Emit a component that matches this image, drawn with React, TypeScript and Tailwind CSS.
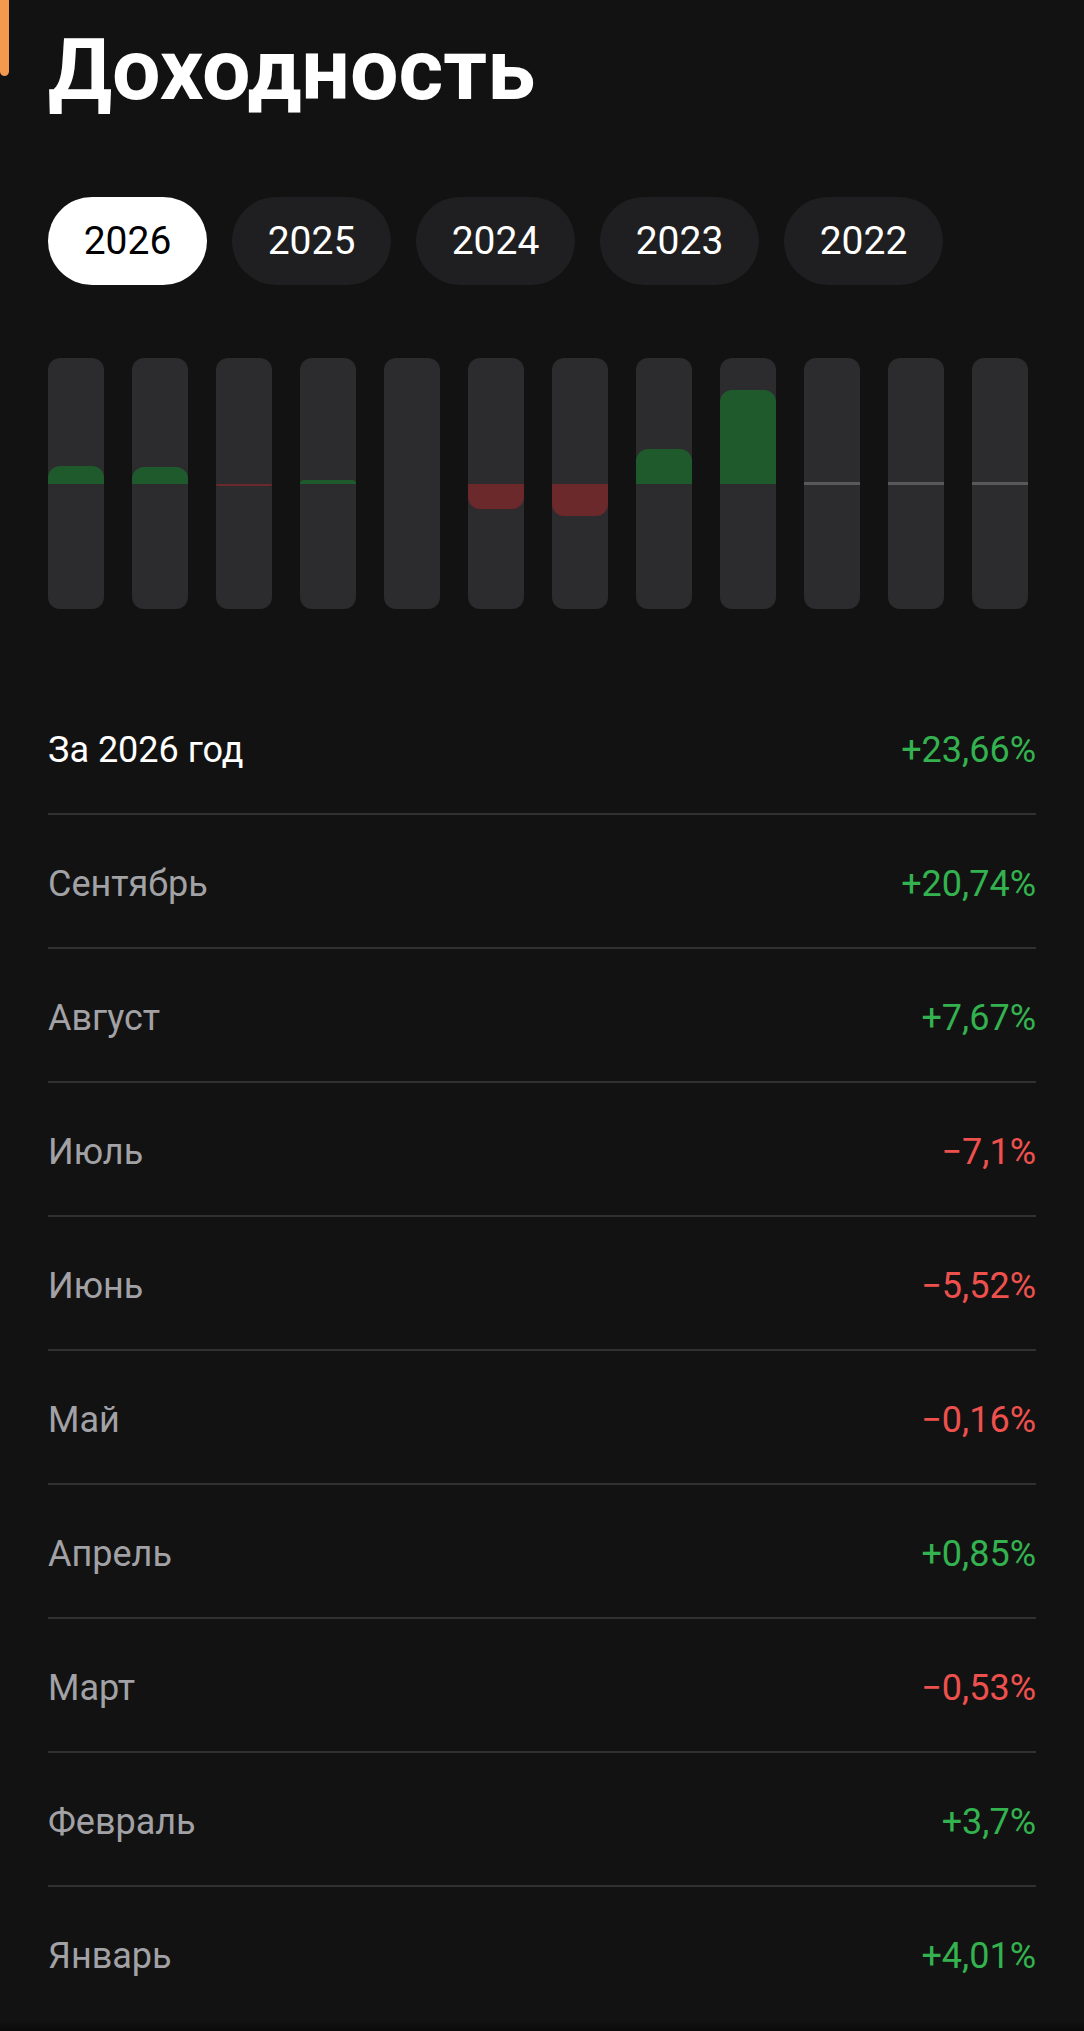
import React from "react"

const years = ["2026", "2025", "2024", "2023", "2022"]

// monthly returns, Jan..Dec (null = month not reached yet)
const monthly: (number | null)[] = [4.01, 3.7, -0.53, 0.85, -0.16, -5.52, -7.1, 7.67, 20.74, null, null, null]

const rows = [
  { label: "Сентябрь", value: "+20,74%", up: true },
  { label: "Август", value: "+7,67%", up: true },
  { label: "Июль", value: "−7,1%", up: false },
  { label: "Июнь", value: "−5,52%", up: false },
  { label: "Май", value: "−0,16%", up: false },
  { label: "Апрель", value: "+0,85%", up: true },
  { label: "Март", value: "−0,53%", up: false },
  { label: "Февраль", value: "+3,7%", up: true },
  { label: "Январь", value: "+4,01%", up: true },
]

const PX_PER_PERCENT = 4.53

function Bar({ value }: { value: number | null }) {
  const h = value === null ? 0 : Math.abs(value) * PX_PER_PERCENT
  const shown = h >= 1 ? Math.round(h) : 0

  return (
    <div className="relative flex h-[251px] w-[56px] flex-col overflow-hidden rounded-[12px] bg-[#2c2c2e]">
      <div className="flex flex-1 flex-col justify-end">
        {value !== null && value > 0 && shown > 0 && (
          <div className="w-full rounded-t-[12px] bg-[#1f5a2d]" style={{ height: shown }} />
        )}
      </div>
      <div className="flex flex-1 flex-col justify-start">
        {value !== null && value < 0 && shown > 0 && (
          <div className="w-full rounded-b-[12px] bg-[#6b292b]" style={{ height: shown }} />
        )}
      </div>
      {value === null && (
        <div className="absolute left-0 right-0 top-[124px] h-[3px] bg-[#58585b]" />
      )}
    </div>
  )
}

export default function App() {
  return (
    <div
      className="relative h-[2031px] overflow-hidden bg-[#121212] text-white"
      style={{ fontFamily: "Roboto, 'Noto Sans', sans-serif" }}
    >
      <div className="absolute left-0 top-0 h-[76px] w-[9px] rounded-b-full bg-[#f39a4f]" />

      <div className="px-[48px]">
        <h1 className="pt-[27px] text-[86px] font-bold leading-none">Доходность</h1>

        <div className="mt-[84px] flex gap-[25px]">
          {years.map((y, i) => (
            <div
              key={y}
              className={
                i === 0
                  ? "flex h-[88px] w-[159px] items-center justify-center rounded-full bg-white text-[39px] text-black"
                  : "flex h-[88px] w-[159px] items-center justify-center rounded-full bg-[#1f1f21] text-[39px] text-white"
              }
            >
              {y}
            </div>
          ))}
        </div>

        <div className="mt-[73px] flex gap-[28px]">
          {monthly.map((v, i) => (
            <Bar key={i} value={v} />
          ))}
        </div>

        <div className="mt-[72px]">
          <div className="flex h-[134px] items-center justify-between border-b-2 border-[#313133] pt-[5px] text-[36px]">
            <span className="text-white">За 2026 год</span>
            <span className="text-[#33b24f]">+23,66%</span>
          </div>
          {rows.map((r, i) => (
            <div
              key={r.label}
              className={
                i === rows.length - 1
                  ? "flex h-[134px] items-center justify-between pt-[3px] text-[36px]"
                  : "flex h-[134px] items-center justify-between border-b-2 border-[#313133] pt-[5px] text-[36px]"
              }
            >
              <span className="text-[#a2a2a6]">{r.label}</span>
              <span className={r.up ? "text-[#33b24f]" : "text-[#ee514d]"}>{r.value}</span>
            </div>
          ))}
        </div>
      </div>

      <div className="absolute bottom-0 left-0 right-0 h-[10px] bg-gradient-to-b from-[#121212] to-[#0a0a0a]" />
    </div>
  )
}
